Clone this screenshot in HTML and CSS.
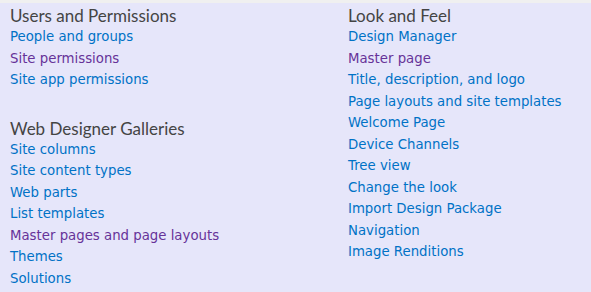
FILE: index.html
```html
<!DOCTYPE html>
<html lang="en">
<head>
    <meta charset="UTF-8">
    <meta name="viewport" content="width=device-width, initial-scale=1.0">
    <title>Site Settings</title>
    <link rel="stylesheet" href="styles.css">
</head>
<body>
    <div class="topbar"></div>
    <div id="settings">
        <div class="column">
            <div class="group">
                <h3 class="group-title">Users and Permissions</h3>
                <ul class="links">
                    <li><a href="#">People and groups</a></li>
                    <li><a href="#" class="visited">Site permissions</a></li>
                    <li><a href="#">Site app permissions</a></li>
                </ul>
            </div>
            <div class="group">
                <h3 class="group-title">Web Designer Galleries</h3>
                <ul class="links">
                    <li><a href="#">Site columns</a></li>
                    <li><a href="#">Site content types</a></li>
                    <li><a href="#">Web parts</a></li>
                    <li><a href="#">List templates</a></li>
                    <li><a href="#" class="visited">Master pages and page layouts</a></li>
                    <li><a href="#">Themes</a></li>
                    <li><a href="#">Solutions</a></li>
                </ul>
            </div>
        </div>
        <div class="column">
            <div class="group">
                <h3 class="group-title">Look and Feel</h3>
                <ul class="links">
                    <li><a href="#">Design Manager</a></li>
                    <li><a href="#" class="visited">Master page</a></li>
                    <li><a href="#">Title, description, and logo</a></li>
                    <li><a href="#">Page layouts and site templates</a></li>
                    <li><a href="#">Welcome Page</a></li>
                    <li><a href="#">Device Channels</a></li>
                    <li><a href="#">Tree view</a></li>
                    <li><a href="#">Change the look</a></li>
                    <li><a href="#">Import Design Package</a></li>
                    <li><a href="#">Navigation</a></li>
                    <li><a href="#">Image Renditions</a></li>
                </ul>
            </div>
        </div>
    </div>
</body>
</html>
```

FILE: styles.css
```css
body {
    margin: 0;
    padding: 0;
    background-color: #e6e6fa;
    font-family: "DejaVu Sans", Verdana, sans-serif;
}

.topbar {
    height: 3px;
    background-color: #f0f0f0;
}

#settings {
    display: flex;
    padding: 3px 10px 0 10px;
}

.column {
    width: 338px;
}

.column + .column {
    flex: 1;
}

.group {
    margin-bottom: 29px;
}

.group:last-child {
    margin-bottom: 0;
}

.group-title {
    margin: 0;
    font-family: Lato, sans-serif;
    font-weight: 400;
    font-size: 17px;
    line-height: 19px;
    color: #444444;
}

.links {
    list-style: none;
    margin: 0;
    padding: 0;
}

.links li {
    height: 21.5px;
    line-height: 21.5px;
}

.links a {
    font-size: 13.3px;
    color: #0072c6;
    text-decoration: none;
}

.links a.visited {
    color: #663399;
}
```
